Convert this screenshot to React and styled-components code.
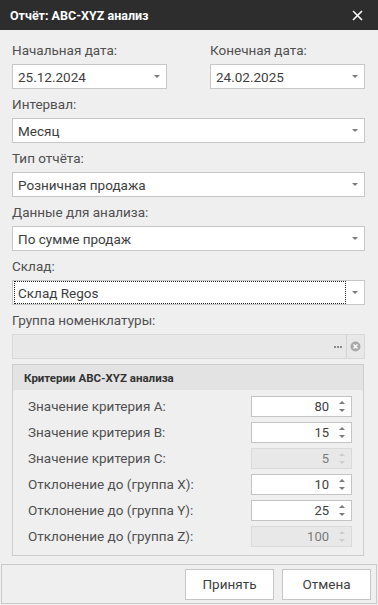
import React from "react";
import styled, { createGlobalStyle } from "styled-components";

const GlobalStyle = createGlobalStyle`
  html, body {
    margin: 0;
    padding: 0;
    background: #efefef;
  }
  * {
    box-sizing: border-box;
  }
`;

const Window = styled.div`
  width: 378px;
  height: 605px;
  display: flex;
  flex-direction: column;
  background: #efefef;
  font-family: Roboto, "Noto Sans", sans-serif;
  font-size: 13.5px;
  color: #4a4a4a;
  overflow: hidden;
`;

const TitleBar = styled.div`
  height: 30px;
  flex: none;
  display: flex;
  align-items: center;
  justify-content: space-between;
  padding: 0 14px 0 10px;
  background: #2d2d2d;
  color: #ffffff;
  font-size: 12.5px;
  font-weight: 700;
`;

const CloseButton = styled.span`
  display: flex;
  align-items: center;
  justify-content: center;
  width: 14px;
  height: 14px;
`;

const Content = styled.div`
  flex: 1;
  padding: 10px 13px 0 12px;
`;

const TwoCols = styled.div`
  display: grid;
  grid-template-columns: 155px 155px;
  column-gap: 43px;
`;

const Field = styled.div`
  display: flex;
  flex-direction: column;
  margin-bottom: 5px;
`;

const Label = styled.div`
  height: 20px;
  line-height: 20px;
  margin-bottom: 4px;
  color: #505050;
  white-space: nowrap;
`;

const Box = styled.div`
  position: relative;
  height: 25px;
  display: flex;
  align-items: center;
  background: ${(p) => (p.disabled ? "#e8e8e8" : "#ffffff")};
  border: 1px solid ${(p) => (p.disabled ? "#d8d8d8" : "#c7c7c7")};
  color: #3e3e3e;
`;

const BoxText = styled.div`
  flex: 1;
  height: 100%;
  display: flex;
  align-items: center;
  margin: ${(p) => (p.focused ? "1px 0 1px 1px" : "0")};
  outline: ${(p) => (p.focused ? "1px dotted #222" : "none")};
  outline-offset: -1px;
  padding-left: ${(p) => (p.focused ? "4px" : "5px")};
  white-space: nowrap;
`;

const ArrowCell = styled.div`
  width: 18px;
  height: 100%;
  display: flex;
  align-items: center;
  justify-content: center;
`;

const Arrow = styled.div`
  width: 0;
  height: 0;
  border-left: 3px solid transparent;
  border-right: 3px solid transparent;
  border-top: 3px solid #7a7a7a;
`;

const Dots = styled.div`
  width: 16px;
  height: 100%;
  display: flex;
  align-items: center;
  justify-content: center;
  gap: 1px;
`;

const Dot = styled.span`
  width: 2px;
  height: 2px;
  background: #8a8a8a;
`;

const Separator = styled.div`
  width: 1px;
  height: 100%;
  background: #d3d3d3;
`;

const ClearCell = styled.div`
  width: 17px;
  height: 100%;
  display: flex;
  align-items: center;
  justify-content: center;
`;

const GroupBox = styled.div`
  margin-top: 3px;
  width: 352px;
  border: 1px solid #cdcdcd;
  padding-bottom: 6px;
`;

const GroupHeader = styled.div`
  height: 25px;
  display: flex;
  align-items: center;
  padding-left: 11px;
  background: #e3e3e3;
  font-size: 11.5px;
  font-weight: 700;
  color: #333;
`;

const GroupBody = styled.div`
  padding: 3px 0 0 15px;
`;

const SpinRow = styled.div`
  height: 26px;
  display: flex;
  align-items: center;
  justify-content: space-between;
  padding-right: 11px;
`;

const SpinLabel = styled.div`
  color: #505050;
  white-space: nowrap;
`;

const SpinBox = styled.div`
  width: 101px;
  height: 21px;
  display: flex;
  align-items: center;
  background: ${(p) => (p.disabled ? "#e8e8e8" : "#ffffff")};
  border: 1px solid ${(p) => (p.disabled ? "#dadada" : "#c4c4c4")};
`;

const SpinValue = styled.div`
  flex: 1;
  text-align: right;
  padding-right: 6px;
  font-size: 13px;
  color: ${(p) => (p.disabled ? "#7a7a7a" : "#3e3e3e")};
`;

const SpinArrows = styled.div`
  width: 16px;
  display: flex;
  flex-direction: column;
  align-items: center;
  gap: 5px;
  padding-right: 3px;
`;

const SpinUp = styled.div`
  width: 0;
  height: 0;
  border-left: 3px solid transparent;
  border-right: 3px solid transparent;
  border-bottom: 3px solid ${(p) => (p.disabled ? "#cdcdcd" : "#7a7a7a")};
`;

const SpinDown = styled.div`
  width: 0;
  height: 0;
  border-left: 3px solid transparent;
  border-right: 3px solid transparent;
  border-top: 3px solid ${(p) => (p.disabled ? "#cdcdcd" : "#7a7a7a")};
`;

const Footer = styled.div`
  flex: none;
  height: 40px;
  margin: 0 1px 1px 1px;
  border: 1px solid #c9c9c9;
  display: flex;
  align-items: center;
  justify-content: flex-end;
  gap: 8px;
  padding: 0 5px 0 0;
`;

const Button = styled.button`
  width: ${(p) => p.w}px;
  height: 31px;
  background: #ffffff;
  border: 1px solid #c6c6c6;
  font-family: inherit;
  font-size: 13.5px;
  color: #3e3e3e;
  padding: 0;
`;

function Combo({ value, focused }) {
  return (
    <Box>
      <BoxText focused={focused}>{value}</BoxText>
      <ArrowCell>
        <Arrow />
      </ArrowCell>
    </Box>
  );
}

function Spin({ label, value, disabled }) {
  return (
    <SpinRow>
      <SpinLabel>{label}</SpinLabel>
      <SpinBox disabled={disabled}>
        <SpinValue disabled={disabled}>{value}</SpinValue>
        <SpinArrows>
          <SpinUp disabled={disabled} />
          <SpinDown disabled={disabled} />
        </SpinArrows>
      </SpinBox>
    </SpinRow>
  );
}

export default function App() {
  const criteria = [
    { label: "Значение критерия A:", value: "80" },
    { label: "Значение критерия B:", value: "15" },
    { label: "Значение критерия C:", value: "5", disabled: true },
    { label: "Отклонение до (группа X):", value: "10" },
    { label: "Отклонение до (группа Y):", value: "25" },
    { label: "Отклонение до (группа Z):", value: "100", disabled: true },
  ];

  return (
    <>
      <GlobalStyle />
      <Window>
        <TitleBar>
          <span>Отчёт: ABC-XYZ анализ</span>
          <CloseButton>
            <svg width="11" height="11" viewBox="0 0 11 11">
              <path d="M1 1L10 10M10 1L1 10" stroke="#fff" strokeWidth="1.6" />
            </svg>
          </CloseButton>
        </TitleBar>
        <Content>
          <TwoCols>
            <Field>
              <Label>Начальная дата:</Label>
              <Combo value="25.12.2024" />
            </Field>
            <Field>
              <Label>Конечная дата:</Label>
              <Combo value="24.02.2025" />
            </Field>
          </TwoCols>
          <Field>
            <Label>Интервал:</Label>
            <Combo value="Месяц" />
          </Field>
          <Field>
            <Label>Тип отчёта:</Label>
            <Combo value="Розничная продажа" />
          </Field>
          <Field>
            <Label>Данные для анализа:</Label>
            <Combo value="По сумме продаж" />
          </Field>
          <Field>
            <Label>Склад:</Label>
            <Combo value="Склад Regos" focused />
          </Field>
          <Field>
            <Label>Группа номенклатуры:</Label>
            <Box disabled>
              <BoxText />
              <Dots>
                <Dot />
                <Dot />
                <Dot />
              </Dots>
              <Separator />
              <ClearCell>
                <svg width="11" height="11" viewBox="0 0 11 11">
                  <circle cx="5.5" cy="5.5" r="5" fill="#a9a9a9" />
                  <path d="M3.5 3.5L7.5 7.5M7.5 3.5L3.5 7.5" stroke="#fff" strokeWidth="1.4" />
                </svg>
              </ClearCell>
            </Box>
          </Field>
          <GroupBox>
            <GroupHeader>Критерии ABC-XYZ анализа</GroupHeader>
            <GroupBody>
              {criteria.map((c) => (
                <Spin key={c.label} {...c} />
              ))}
            </GroupBody>
          </GroupBox>
        </Content>
        <Footer>
          <Button w={89}>Принять</Button>
          <Button w={89}>Отмена</Button>
        </Footer>
      </Window>
    </>
  );
}
